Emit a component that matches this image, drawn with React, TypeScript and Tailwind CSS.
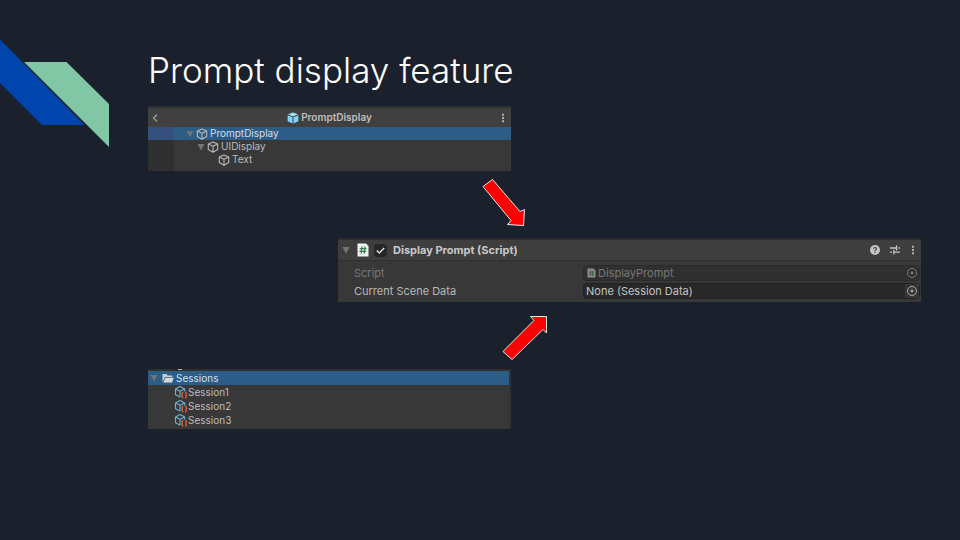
import React from "react";

const Cube = ({ className = "text-[#b8b8b8]" }: { className?: string }) => (
  <svg viewBox="0 0 12 12" className={`h-3 w-3 shrink-0 ${className}`} fill="none" stroke="currentColor" strokeWidth="1.1" strokeLinejoin="round">
    <path d="M6 .9 10.700 3v5.600L6 11.200 1.300 8.600V3zM1.300 3 6 5.300 10.700 3M6 5.300v5.900" />
  </svg>
);

const SolidCube = () => (
  <svg viewBox="0 0 12 12" className="h-3 w-3 shrink-0">
    <path d="M6 .4 11 2.300 6 4.600 1 2.300z" fill="#9fe0ff" />
    <path d="M.6 3.200 5.500 5.300v6.300L.6 9.300zM11.400 3.200 6.500 5.300v6.300l4.900-2.300z" fill="#7fd2fb" />
  </svg>
);

const AssetIcon = () => (
  <svg viewBox="0 0 14 14" className="h-3.5 w-3.5 shrink-0" fill="none">
    <path d="M6 12 1.500 9.800V4L6 1.500 10.700 4v2.500M1.500 4 6 6.200 10.700 4M6 6.200V12" stroke="#6fb0cf" strokeWidth="1.100" strokeLinejoin="round" />
    <path d="M9.300 7.200q-1.200.2-1.200 1.400v3q0 1.200 1.200 1.400M11 7.200q1.200.2 1.200 1.400v3q0 1.200-1.200 1.400" stroke="#d9603a" strokeWidth="1.400" />
  </svg>
);

const Fold = ({ label }: { label: string }) => (
  <button type="button" aria-label={label} className="flex shrink-0 items-center text-[#747474]">
    <svg viewBox="0 0 8 8" className="h-2 w-2" fill="currentColor">
      <path d="M.5 1h7L4 7.500z" />
    </svg>
  </button>
);

const Dots = ({ label }: { label: string }) => (
  <button type="button" aria-label={label} className="flex items-center text-[#b0b0b0]">
    <svg viewBox="0 0 4 10" className="h-2.5 w-1" fill="currentColor">
      <path d="M1 .7h2v2H1zM1 4h2v2H1zM1 7.300h2v2H1z" />
    </svg>
  </button>
);

const Target = () => (
  <svg viewBox="0 0 12 12" className="h-3 w-3" fill="none" stroke="currentColor">
    <circle cx="6" cy="6" r="4.500" />
    <circle cx="6" cy="6" r="1.400" fill="currentColor" stroke="none" />
  </svg>
);

const Arrow = ({ d, className }: { d: string; className: string }) => (
  <svg viewBox="0 0 50 67" className={`col-span-2 col-start-2 h-[67px] w-[50px] ${className}`}>
    <path d={d} fill="#ff0000" stroke="#e8e8e8" strokeWidth="1" />
  </svg>
);

function HierarchyPanel() {
  return (
    <section className="col-span-2 h-[65px] border-t-2 border-[#303030] bg-[#383838] text-[10px] leading-[13px] text-[#bcbcbc]">
      <header className="flex h-[19px] items-center justify-between bg-[#404040] pr-1.5 pl-1">
        <button type="button" aria-label="Back" className="text-[#a0a0a0]">
          <svg viewBox="0 0 6 10" className="h-2.5 w-1.5" fill="none" stroke="currentColor" strokeWidth="1.2">
            <path d="M5 1.500 1.500 5 5 8.500" />
          </svg>
        </button>
        <h2 className="flex items-center gap-0.5 font-semibold text-[#bebebe]">
          <SolidCube />
          PromptDisplay
        </h2>
        <Dots label="Hierarchy menu" />
      </header>
      <ul>
        <li className="flex h-[13px] bg-[#2c5d87] text-[#d2dfe9]">
          <span className="w-[26px] bg-[#35507f]" />
          <span className="flex items-center gap-0.5 pl-3">
            <Fold label="Toggle PromptDisplay" />
            <Cube />
            PromptDisplay
          </span>
        </li>
        <li className="flex h-[13px]">
          <span className="w-[26px] bg-[#303030]" />
          <span className="flex items-center gap-0.5 pl-[23px]">
            <Fold label="Toggle UIDisplay" />
            <Cube />
            UIDisplay
          </span>
        </li>
        <li className="flex h-[18px]">
          <span className="w-[26px] bg-[#303030]" />
          <span className="flex h-[13px] items-center gap-0.5 pl-11">
            <Cube />
            Text
          </span>
        </li>
      </ul>
    </section>
  );
}

function InspectorPanel() {
  return (
    <section className="col-span-2 col-start-2 h-16 border-t-2 border-[#2b2b2b] bg-[#383838] text-[11px] text-[#b8b8b8]">
      <header className="flex h-[21px] items-center border-b border-[#303030] bg-[#3e3e3e] pr-1.5 pl-1">
        <Fold label="Toggle component" />
        <svg viewBox="0 0 12 14" className="ml-1.5 h-3.5 w-3.5">
          <path d="M.5.5H9l2.500 2.500v10.500H.5z" fill="#f0f0f0" />
          <path d="M5 3.500 4.200 10.500M8 3.500 7.200 10.500M2.800 5.600h6.700M2.500 8.400h6.700" stroke="#34824a" strokeWidth="1.300" fill="none" />
        </svg>
        <span className="relative ml-1 flex h-[13px] w-[13px]">
          <input id="enabled" type="checkbox" defaultChecked className="peer h-full w-full appearance-none rounded-sm bg-[#262626]" />
          <svg viewBox="0 0 13 13" className="pointer-events-none absolute inset-0 hidden peer-checked:block" fill="none" stroke="#dedede" strokeWidth="1.500">
            <path d="M2.800 6.500 5.300 9 10.200 4" />
          </svg>
        </span>
        <label htmlFor="enabled" className="ml-1.5 font-bold text-[#c8c8c8]">
          Display Prompt (Script)
        </label>
        <div className="ml-auto flex items-center gap-2">
          <button type="button" aria-label="Help">
            <svg viewBox="0 0 12 12" className="h-3 w-3">
              <circle cx="6" cy="6" r="5" fill="#c4c4c4" />
              <path d="M4.500 4.800q.1-1.300 1.500-1.300t1.500 1.200q0 .7-.8 1.100-.7.400-.7 1.100M6 7.800v1.100" fill="none" stroke="#3e3e3e" strokeWidth="1.100" />
            </svg>
          </button>
          <button type="button" aria-label="Presets">
            <svg viewBox="0 0 12 12" className="h-3 w-3" fill="none" stroke="#c4c4c4" strokeWidth="1.300">
              <path d="M1 4h6.500M9.500 4H11M7.600 1.600v4.800M1 8.200h2M5 8.200h6M4.900 5.800v4.800" />
            </svg>
          </button>
          <span className="flex pl-0.5">
            <Dots label="Component menu" />
          </span>
        </div>
      </header>
      <div className="grid grid-cols-[245fr_338fr] gap-y-0.5 pt-1">
        <label htmlFor="script" className="pl-4 leading-4 text-[#777777]">Script</label>
        <div className="mr-px flex h-4 items-center rounded-sm border border-[#2b2b2b] bg-[#303030] pl-[3px] text-[#777777]">
          <svg viewBox="0 0 9 10" className="h-2.5 w-[9px] shrink-0">
            <path d="M.5.500h6l2 2v7h-8z" fill="#8c8c8c" />
            <path d="M3.500 2.500 3 8M6 2.500 5.500 8M2 4.200h5M2 6.400h5" stroke="#44604a" strokeWidth=".9" fill="none" />
          </svg>
          <input id="script" readOnly value="DisplayPrompt" className="ml-0.5 min-w-0 flex-1 bg-transparent outline-none" />
          <button type="button" aria-label="Pick script" disabled className="flex w-3.5 justify-center">
            <Target />
          </button>
        </div>
        <label htmlFor="scene" className="pl-4 leading-4">Current Scene Data</label>
        <div className="mr-px flex h-4 items-center rounded-sm border border-[#222222] bg-[#282828] pl-0.5 text-[#c4c4c4]">
          <input id="scene" readOnly value="None (Session Data)" className="min-w-0 flex-1 bg-transparent outline-none" />
          <button type="button" aria-label="Pick session data" className="flex h-full w-3.5 items-center justify-center bg-[#363636] text-[#a8a8a8]">
            <Target />
          </button>
        </div>
      </div>
    </section>
  );
}

function ProjectPanel() {
  return (
    <section className="col-span-2 h-[60px] border-r-2 border-[#333333] bg-[#383838] text-[10px] leading-[14px] text-[#bcbcbc]">
      <div className="h-0.5 bg-[#303030] pl-[30px]">
        <span className="block h-px w-1 bg-[#b0b0b0]" />
      </div>
      <div className="flex h-3.5 items-center bg-[#2c5d87] pl-0.5 text-[#d2dfe9]">
        <Fold label="Toggle Sessions" />
        <svg viewBox="0 0 12 12" className="mr-0.5 ml-1 h-3 w-3">
          <path d="M.5 10V2h4l1 1.500h4.800V5H3z" fill="#c9cdd0" />
          <path d="M3.300 5.700h8.500L10 10.500H1.300z" fill="#d5d8da" />
        </svg>
        Sessions
      </div>
      <ul>
        {["Session1", "Session2", "Session3"].map((name) => (
          <li key={name} className="flex h-3.5 items-center pl-[26px]">
            <AssetIcon />
            {name}
          </li>
        ))}
      </ul>
    </section>
  );
}

export default function App() {
  return (
    <div className="flex min-h-screen bg-[#1b212c] font-['Inter','Liberation_Sans',sans-serif]">
      <svg viewBox="0 0 109 150" className="h-[150px] w-[109px] shrink-0" aria-hidden="true">
        <path d="M0 39.500 84.500 125H42L0 83z" fill="#0045ae" />
        <path d="M24 62h42.500L109 104v43z" fill="#82c7a5" />
      </svg>
      <main className="min-w-0 flex-1 pt-[50px] pr-[39px] pl-[39px]">
        <h1 className="mb-4 text-[35px] leading-10 font-light text-white">Prompt display feature</h1>
        <div className="grid grid-cols-[190fr_173fr_410fr]">
          <HierarchyPanel />
          <Arrow className="ml-[142px]" d="M3 15.500 12.500 8.500 40 40.500 44.500 38.500 43.500 54.500 27.500 53.500 31 49.500z" />
          <InspectorPanel />
          <Arrow className="ml-[162px]" d="M3 49.500 12 57.500 43 27.500 46.500 31V14.500H30.500L34 18.500z" />
          <ProjectPanel />
        </div>
      </main>
    </div>
  );
}
